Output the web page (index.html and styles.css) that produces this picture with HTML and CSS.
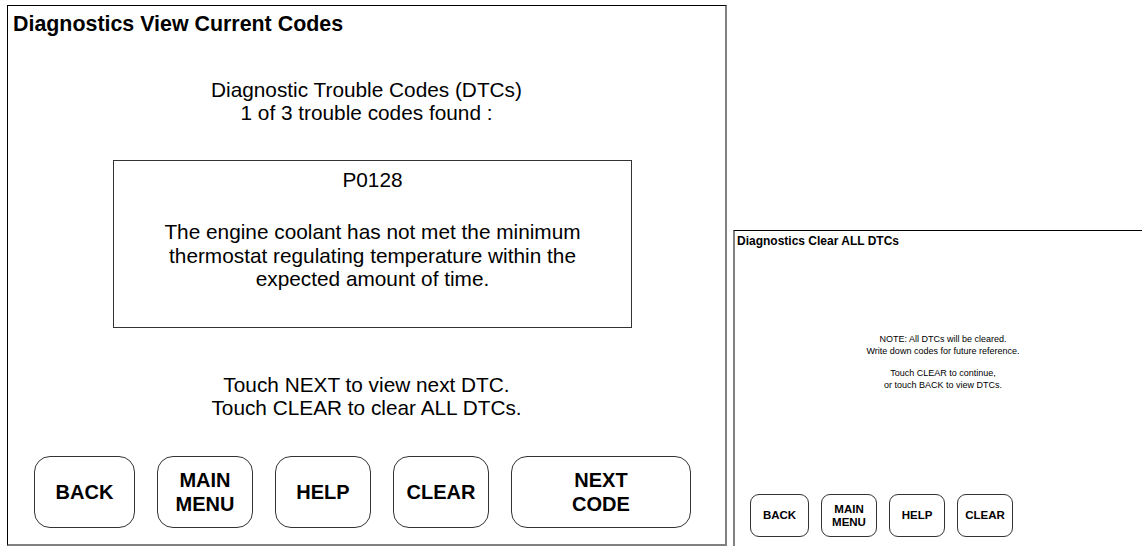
FILE: index.html
```html
<!DOCTYPE html>
<html>
<head>
<meta charset="utf-8">
<link rel="stylesheet" href="styles.css">
</head>
<body>
<div class="page">
  <section class="screen screen-large">
    <h1 class="title">Diagnostics View Current Codes</h1>
    <div class="heading">
      <div>Diagnostic Trouble Codes (DTCs)</div>
      <div>1 of 3 trouble codes found :</div>
    </div>
    <div class="code-box">
      <div class="code">P0128</div>
      <div class="desc">The engine coolant has not met the minimum<br>thermostat regulating temperature within the<br>expected amount of time.</div>
    </div>
    <div class="hint">
      <div>Touch NEXT to view next DTC.</div>
      <div>Touch CLEAR to clear ALL DTCs.</div>
    </div>
    <div class="buttons">
      <div class="btn btn-back">BACK</div>
      <div class="btn">MAIN<br>MENU</div>
      <div class="btn">HELP</div>
      <div class="btn">CLEAR</div>
      <div class="btn btn-wide">NEXT<br>CODE</div>
    </div>
  </section>
  <section class="screen screen-small">
    <h2 class="title-small">Diagnostics Clear ALL DTCs</h2>
    <div class="note">
      <div>NOTE: All DTCs will be cleared.</div>
      <div>Write down codes for future reference.</div>
    </div>
    <div class="note note-second">
      <div>Touch CLEAR to continue,</div>
      <div>or touch BACK to view DTCs.</div>
    </div>
    <div class="buttons-small">
      <div class="sbtn sbtn-back">BACK</div>
      <div class="sbtn">MAIN<br>MENU</div>
      <div class="sbtn">HELP</div>
      <div class="sbtn">CLEAR</div>
    </div>
  </section>
</div>
</body>
</html>
```

FILE: styles.css
```css
html, body {
  margin: 0;
  padding: 0;
  overflow: hidden;
  background: #fff;
  color: #000;
  font-family: "Liberation Sans", Arial, sans-serif;
}

.page {
  display: flex;
  align-items: flex-start;
  width: 1142px;
  height: 546px;
  overflow: hidden;
}

.screen {
  box-sizing: border-box;
  flex: none;
  display: flex;
  flex-direction: column;
  background: #fff;
}

.screen-large {
  width: 720px;
  height: 541px;
  margin: 5px 0 0 7px;
  border-top: 1px solid #000;
  border-left: 1px solid #000;
  border-right: 2px solid #808080;
  border-bottom: 2px solid #808080;
}

.title {
  margin: 0;
  padding: 6px 0 0 5px;
  font-size: 21.4px;
  font-weight: bold;
  line-height: 24px;
}

.heading {
  margin-top: 42px;
  text-align: center;
  font-size: 20.8px;
  line-height: 23px;
}

.code-box {
  box-sizing: border-box;
  width: 519px;
  height: 168px;
  margin: 36px 0 0 105px;
  padding-top: 7px;
  border: 1px solid #333;
  text-align: center;
  font-size: 20.8px;
  line-height: 23px;
}

.desc {
  margin-top: 29px;
  line-height: 23.5px;
}

.hint {
  margin-top: 45px;
  text-align: center;
  font-size: 20.8px;
  line-height: 23px;
}

.buttons {
  display: flex;
  gap: 22px;
  margin: 37px 0 0 26px;
}

.btn {
  box-sizing: border-box;
  width: 96px;
  height: 72px;
  border: 1px solid #333;
  border-radius: 16px;
  display: flex;
  align-items: center;
  justify-content: center;
  text-align: center;
  font-size: 20px;
  font-weight: bold;
  line-height: 24px;
}

.btn-back {
  width: 101px;
}

.btn-wide {
  width: 180px;
}

.screen-small {
  width: 418px;
  height: 330px;
  margin: 230px 0 0 6px;
  border-top: 1px solid #000;
  border-left: 2px solid #808080;
}

.title-small {
  margin: 0;
  padding: 3px 0 0 2px;
  font-size: 12px;
  font-weight: bold;
  line-height: 14px;
}

.note {
  margin-top: 85px;
  text-align: center;
  font-size: 9px;
  line-height: 12px;
}

.note-second {
  margin-top: 10px;
}

.buttons-small {
  display: flex;
  gap: 12px;
  margin: 103px 0 0 15px;
}

.sbtn {
  box-sizing: border-box;
  width: 56px;
  height: 43px;
  border: 1px solid #333;
  border-radius: 9px;
  display: flex;
  align-items: center;
  justify-content: center;
  text-align: center;
  font-size: 11.5px;
  font-weight: bold;
  line-height: 13px;
}

.sbtn-back {
  width: 59px;
}
```
